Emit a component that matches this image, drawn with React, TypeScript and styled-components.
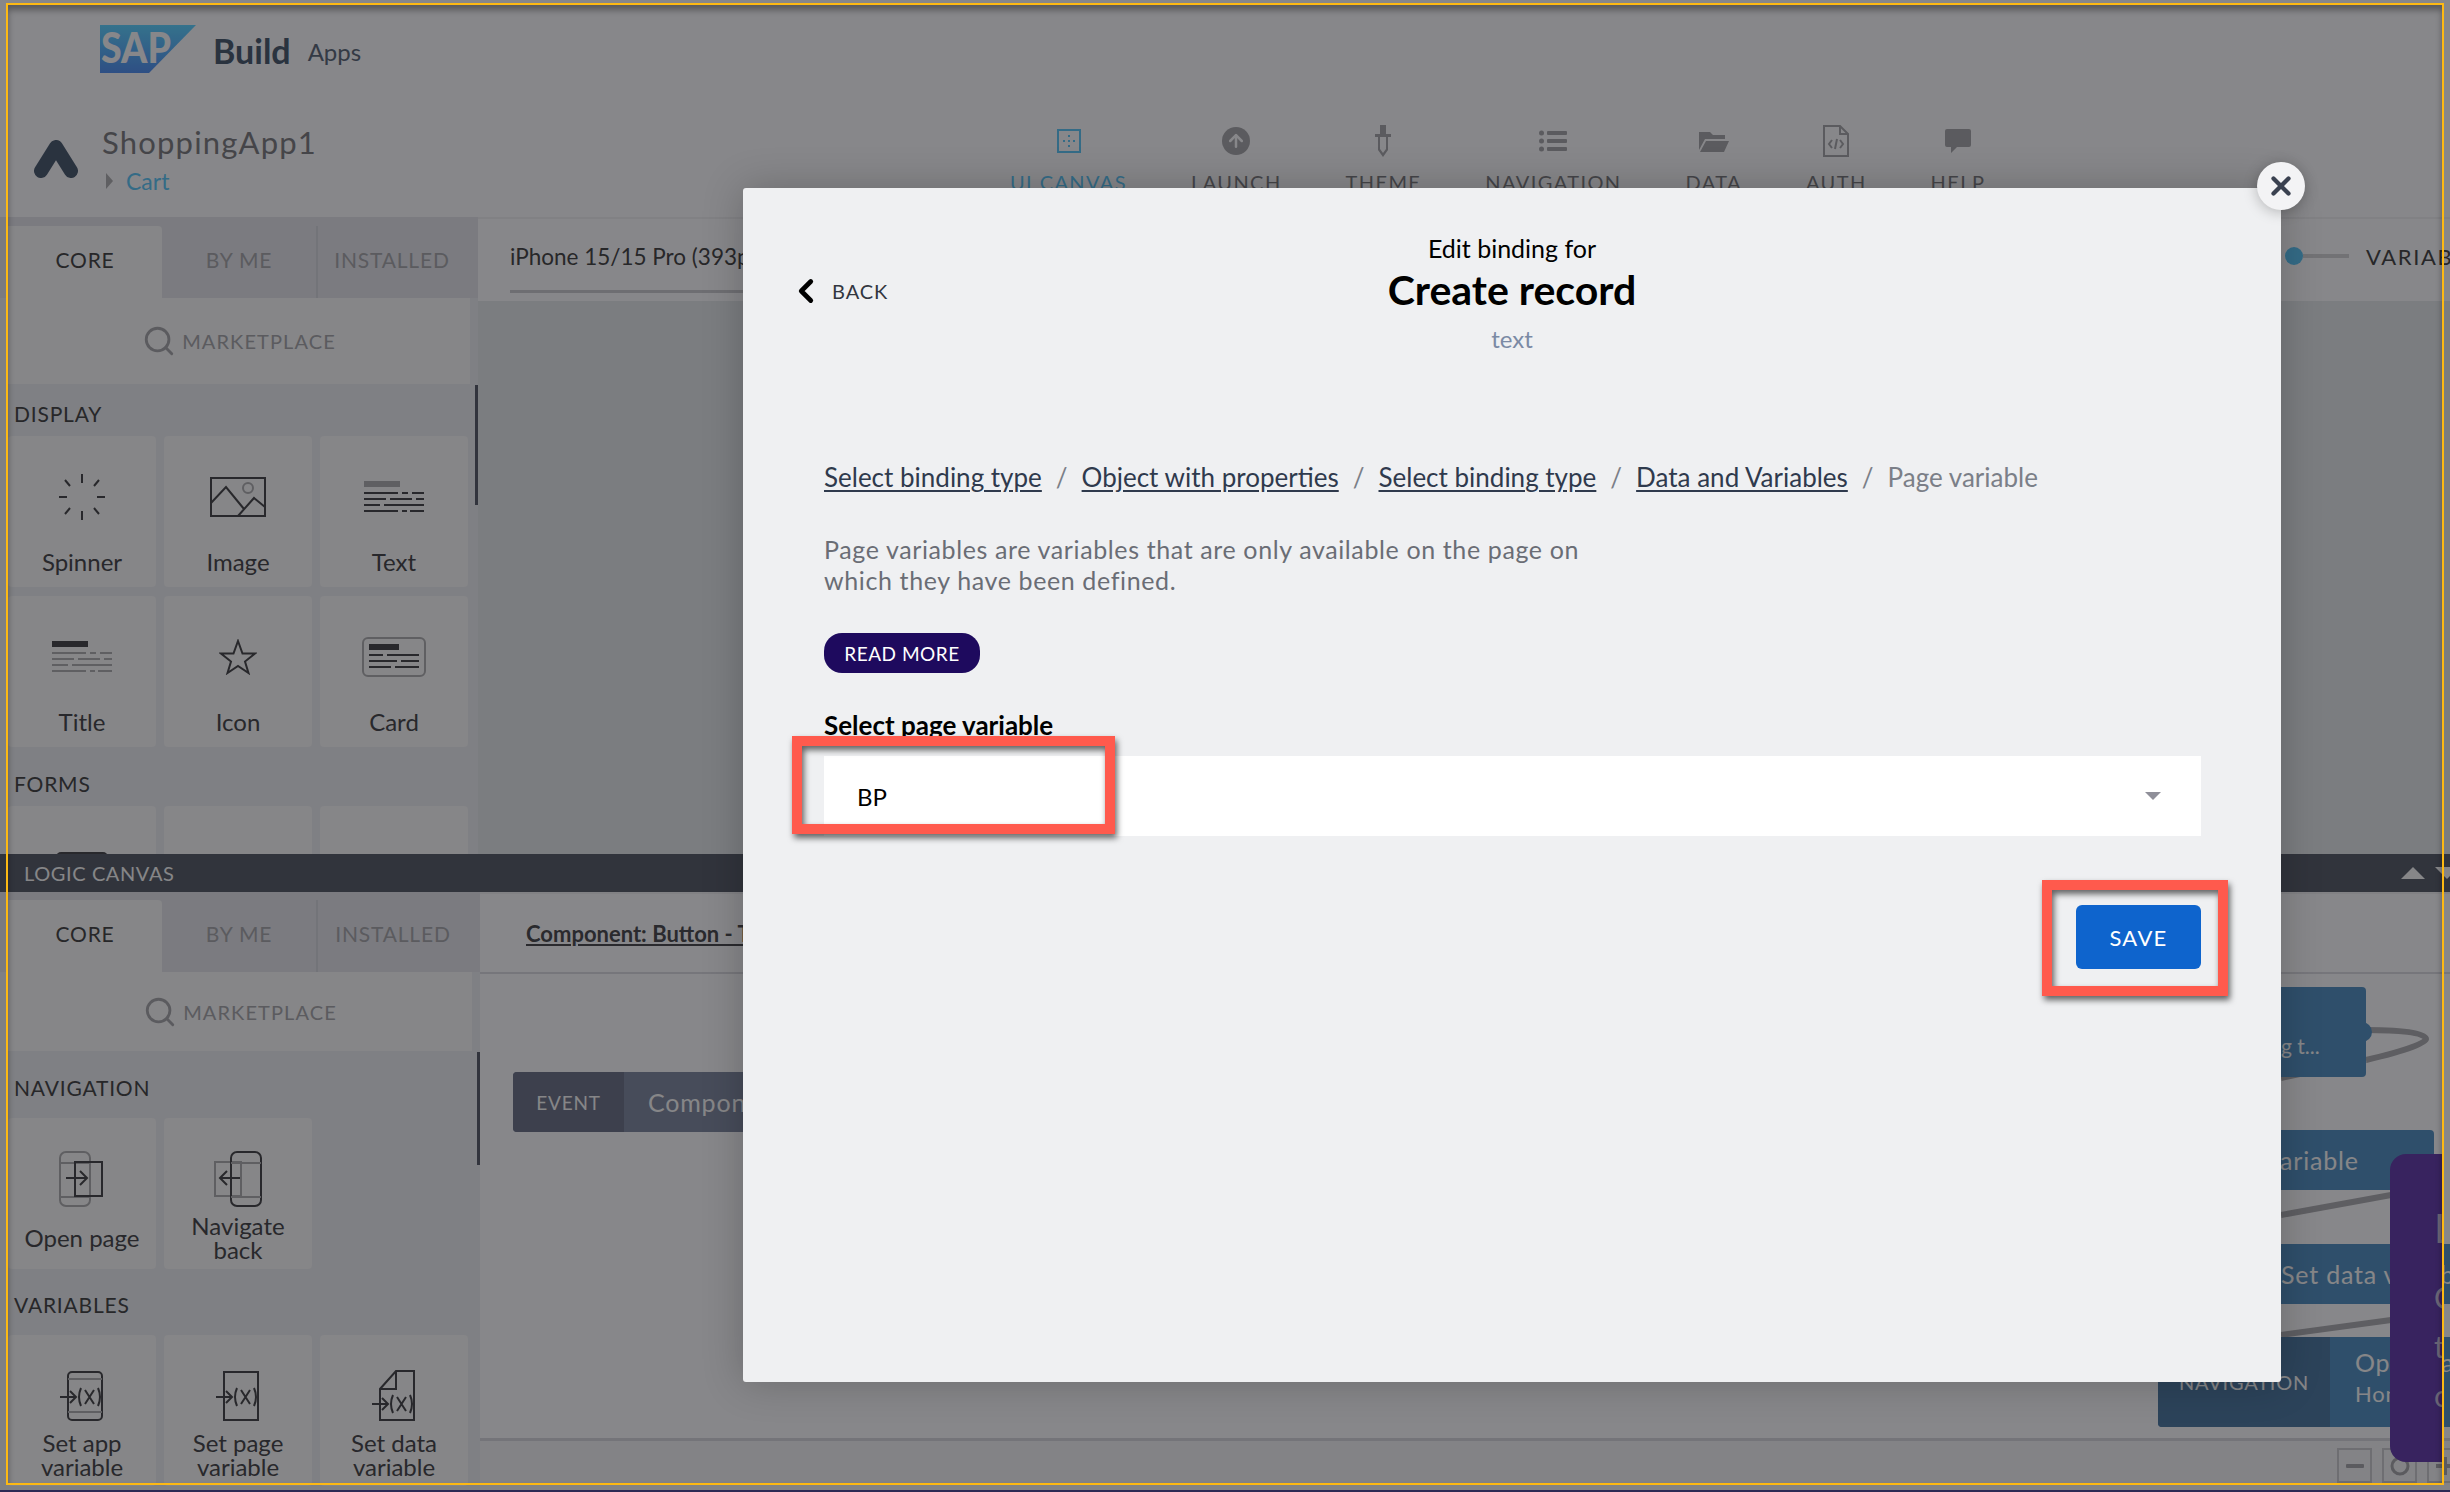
import React from "react";
import styled, { createGlobalStyle } from "styled-components";
import { ChevronLeft, X, Search, ArrowUp } from "lucide-react";

const GlobalStyle = createGlobalStyle`
  html, body {
    margin: 0;
    padding: 0;
    background: #87878a;
    font-family: Lato, "Open Sans", sans-serif;
  }
  * { box-sizing: border-box; }
`;

// the whole builder sits behind the dim layer, so these colours look lighter than the picture
const Page = styled.div`
  position: relative;
  width: 2450px;
  height: 1492px;
  overflow: hidden;
  background: #f6f6fb;
  display: flex;
  flex-direction: column;
`;

const TopBar = styled.header`
  height: 90px;
  padding: 25px 0 0 100px;
  display: flex;
  align-items: flex-start;
`;

const LogoSvg = styled.svg`
  overflow: visible;
  flex: none;
`;

const BuildText = styled.span`
  margin: 7px 0 0 17px;
  font-size: 34px;
  line-height: 38px;
  font-weight: 700;
  color: #4d5d74;
`;

const AppsText = styled.span`
  margin: 12px 0 0 17px;
  font-size: 24px;
  line-height: 30px;
  color: #5f6b7e;
`;

const AppBar = styled.div`
  height: 127px;
  display: flex;
  align-items: flex-start;
`;

const BrandMark = styled.svg`
  margin: 50px 0 0 34px;
  flex: none;
`;

const BrandBlock = styled.div`
  width: 932px;
  flex: none;
  padding: 34px 0 0 24px;
`;

const AppName = styled.div`
  font-size: 31px;
  line-height: 36px;
  letter-spacing: 1.2px;
  color: #7f7f85;
`;

const PageCrumb = styled.div`
  margin-top: 8px;
  display: flex;
  align-items: center;
  gap: 13px;
  font-size: 23px;
  line-height: 26px;
  color: #5fc4f5;
  padding-left: 4px;
  &::before {
    content: "";
    border-left: 7px solid #adadb2;
    border-top: 8px solid transparent;
    border-bottom: 8px solid transparent;
  }
`;

const NavRow = styled.nav`
  display: flex;
  gap: 64px;
  padding-top: 34px;
`;

const NavItem = styled.div<{ $active?: boolean }>`
  display: flex;
  flex-direction: column;
  align-items: center;
  gap: 12px;
  font-size: 20px;
  line-height: 24px;
  letter-spacing: 1.4px;
  white-space: nowrap;
  color: ${(p) => (p.$active ? "#5fc4f5" : "#7f7f85")};
`;

const NavIconSlot = styled.div`
  height: 34px;
  display: flex;
  align-items: center;
  justify-content: center;
`;

const Workspace = styled.section<{ $height: number }>`
  height: ${(p) => p.$height}px;
  flex: none;
  display: flex;
  overflow: hidden;
`;

const Sidebar = styled.div<{ $width: number }>`
  position: relative;
  flex: none;
  width: ${(p) => p.$width}px;
  background: #e7e9f0;
  padding-left: 8px;
`;

const TabRow = styled.div<{ $pad: number }>`
  height: ${(p) => 72 + p.$pad}px;
  padding-top: ${(p) => p.$pad}px;
  margin-left: -8px;
  padding-left: 8px;
  background: #e0e1e9;
  display: flex;
`;

const Tab = styled.div<{ $active?: boolean; $w: number; $last?: boolean }>`
  width: ${(p) => p.$w}px;
  height: 100%;
  padding-bottom: 5px;
  display: flex;
  align-items: center;
  justify-content: center;
  font-size: 21px;
  letter-spacing: 0.8px;
  color: ${(p) => (p.$active ? "#48484c" : "#a6a6ad")};
  background: ${(p) => (p.$active ? "#f4f4f7" : "transparent")};
  border-top-right-radius: ${(p) => (p.$active ? "4px" : "0")};
  border-right: ${(p) => (p.$active || p.$last ? "none" : "2px solid #d2d3dc")};
`;

const Marketplace = styled.div<{ $height: number; $width: number }>`
  width: ${(p) => p.$width}px;
  height: ${(p) => p.$height}px;
  background: #f4f4f7;
  display: flex;
  align-items: center;
  justify-content: center;
  gap: 6px;
  font-size: 20px;
  letter-spacing: 1.1px;
  color: #a6a6ad;
  svg { color: #a6a6ad; }
`;

const ScrollThumb = styled.div<{ $top: number; $height: number }>`
  position: absolute;
  top: ${(p) => p.$top}px;
  right: 0;
  width: 3px;
  height: ${(p) => p.$height}px;
  background: #5c6070;
`;

const SectionLabel = styled.div<{ $height: number; $gap: number }>`
  height: ${(p) => p.$height}px;
  margin-top: ${(p) => p.$gap}px;
  margin-left: 6px;
  padding-bottom: 2px;
  display: flex;
  align-items: center;
  font-size: 21px;
  letter-spacing: 0.8px;
  color: #48484c;
`;

const CardGrid = styled.div`
  display: grid;
  grid-template-columns: repeat(3, 148px);
  grid-auto-rows: 151px;
  column-gap: 8px;
  row-gap: 9px;
`;

const Card = styled.div<{ $gap: number }>`
  background: #f4f4f7;
  border-radius: 4px;
  padding-top: 36px;
  display: flex;
  flex-direction: column;
  align-items: center;
  --label-gap: ${(p) => p.$gap}px;
`;

const CardIcon = styled.div`
  height: 50px;
  display: flex;
  align-items: center;
  justify-content: center;
  color: #4a4a50;
`;

const CardLabel = styled.div`
  flex: 1;
  margin-top: var(--label-gap);
  padding-bottom: 2px;
  display: flex;
  align-items: center;
  text-align: center;
  font-size: 24px;
  line-height: 24px;
  color: #4a4a50;
`;

const Stage = styled.div`
  position: relative;
  flex: 1;
  min-width: 0;
  display: flex;
  flex-direction: column;
`;

const StageBar = styled.div<{ $height: number }>`
  height: ${(p) => p.$height}px;
  flex: none;
  padding: 0 0 0 32px;
  background: #f6f6fb;
  border-top: 2px solid #ebebf1;
  display: flex;
  justify-content: space-between;
  align-items: center;
`;

const DeviceSelect = styled.div`
  height: 66px;
  width: 500px;
  font-size: 22.5px;
  line-height: 60px;
  white-space: nowrap;
  color: #48484c;
  border-bottom: 3px solid #c8c8d0;
`;

const VariableToggle = styled.div`
  display: flex;
  align-items: center;
  margin: 0 -44px 8px 0;
  font-size: 22px;
  letter-spacing: 1.6px;
  color: #48484c;
`;

const ToggleDot = styled.span`
  width: 18px;
  height: 18px;
  border-radius: 50%;
  background: #5fc4f5;
`;

const ToggleTrack = styled.span`
  width: 46px;
  height: 4px;
  margin-right: 17px;
  background: #cfcfd6;
`;

const StageBody = styled.div`
  flex: 1;
  background: #e1e3e9;
`;

const LogicBar = styled.div`
  height: 38px;
  flex: none;
  padding-left: 24px;
  background: #595f6d;
  display: flex;
  align-items: center;
  justify-content: space-between;
  font-size: 20px;
  letter-spacing: 0.6px;
  color: #f4f4f7;
`;

const BarArrows = styled.div`
  display: flex;
  gap: 10px;
  margin-right: -9px;
`;

const BarArrow = styled.span<{ $down?: boolean }>`
  border-left: 12px solid transparent;
  border-right: 12px solid transparent;
  ${(p) => (p.$down ? "border-top: 12px solid #f4f4f7;" : "border-bottom: 12px solid #f4f4f7;")}
`;

const ComponentLink = styled.div`
  width: 100%;
  font-size: 22px;
  font-weight: 700;
  padding-left: 14px;
  text-decoration: underline;
  color: #4e4e54;
`;

const LogicBody = styled.div`
  flex: 1;
  border-top: 2px solid #d8d8e0;
  background: #f6f6fb;
`;

const LogicFooter = styled.div`
  height: 54px;
  flex: none;
  border-top: 3px solid #d4d4dc;
  background: #eeeef4;
`;

const WireLayer = styled.svg`
  position: absolute;
  left: 0;
  top: 0;
`;

// flow nodes live on a free canvas, so they keep their own coordinates
const FlowNode = styled.div<{ $x: number; $y: number; $w: number; $h: number }>`
  position: absolute;
  left: ${(p) => p.$x - 480}px;
  top: ${(p) => p.$y - 892}px;
  width: ${(p) => p.$w}px;
  height: ${(p) => p.$h}px;
  border-radius: 4px;
  background: #5791c4;
  color: #f4f4f7;
  display: flex;
  align-items: center;
  overflow: hidden;
  white-space: nowrap;
`;

const NodeTag = styled.div<{ $w: number }>`
  width: ${(p) => p.$w}px;
  height: 100%;
  flex: none;
  display: flex;
  align-items: center;
  justify-content: center;
  font-size: 20px;
  letter-spacing: 0.8px;
  background: #507aa4;
`;

const EventTag = styled(NodeTag)`
  font-size: 19px;
  background: #6f768c;
`;

const EventNode = styled(FlowNode)`
  background: #818aa4;
`;

const NodeText = styled.div<{ $pad: number; $small?: boolean }>`
  padding-left: ${(p) => p.$pad}px;
  font-size: ${(p) => (p.$small ? 22 : 25)}px;
  line-height: 32px;
  letter-spacing: 0.8px;
`;

const NodeHint = styled.div<{ $pad: number }>`
  padding: 26px 0 0 ${(p) => p.$pad}px;
  font-size: 21px;
`;

const NodeStack = styled.div`
  margin-top: -8px;
`;

const Port = styled.div<{ $x: number; $y: number }>`
  position: absolute;
  left: ${(p) => p.$x - 480 - 10}px;
  top: ${(p) => p.$y - 892 - 10}px;
  width: 20px;
  height: 20px;
  border-radius: 50%;
  background: #5791c4;
`;

const ZoomRow = styled.div`
  position: absolute;
  left: ${2337 - 480}px;
  top: ${1448 - 892}px;
  display: flex;
  gap: 10px;
`;

const ZoomButton = styled.div`
  width: 35px;
  height: 35px;
  border: 2px solid #c8c8d0;
  display: flex;
  align-items: center;
  justify-content: center;
  color: #a6a6ad;
`;

const TourPopup = styled.div`
  position: absolute;
  left: ${2390 - 480}px;
  top: ${1154 - 892}px;
  width: 53px;
  height: 308px;
  border-radius: 16px 0 0 16px;
  background: #6640ad;
  overflow: hidden;
  padding: 50px 0 0 44px;
  color: #c2b9d8;
  font-size: 30px;
  line-height: 49px;
`;

const TourTitle = styled.div`
  font-size: 40px;
  margin-bottom: 20px;
`;

const Dim = styled.div`
  position: absolute;
  inset: 0;
  background: rgba(0, 0, 0, 0.45);
`;

const Modal = styled.div`
  position: absolute;
  left: 743px;
  top: 188px;
  width: 1538px;
  height: 1194px;
  background: #eff0f2;
  border-radius: 3px;
  box-shadow: 0 0 40px rgba(0, 0, 0, 0.22);
  padding: 43px 80px 0 81px;
`;

const CloseButton = styled.div`
  position: absolute;
  right: -24px;
  top: -26px;
  width: 48px;
  height: 48px;
  border-radius: 50%;
  background: #f3f3f5;
  box-shadow: 0 2px 14px rgba(0, 0, 0, 0.25);
  display: flex;
  align-items: center;
  justify-content: center;
  color: #3a4150;
`;

const BackLink = styled.div`
  position: absolute;
  left: 44px;
  top: 84px;
  display: flex;
  align-items: center;
  gap: 7px;
  font-size: 20px;
  letter-spacing: 0.9px;
  color: #32363f;
  svg { color: #000; }
`;

const Heading = styled.div`
  display: flex;
  flex-direction: column;
  align-items: center;
  margin-left: -1px;
`;

const Eyebrow = styled.div`
  font-size: 25px;
  line-height: 34px;
  color: #000;
`;

const Title = styled.div`
  font-size: 41px;
  line-height: 50px;
  font-weight: 700;
  color: #000;
`;

const Subtitle = styled.div`
  margin-top: 7px;
  font-size: 24px;
  line-height: 34px;
  color: #7b8aa5;
`;

const Crumbs = styled.div`
  margin-top: 105px;
  display: flex;
  gap: 14px;
  font-size: 26px;
  line-height: 32px;
  color: #2f3a4d;
`;

const CrumbLink = styled.a`
  text-decoration: underline;
  text-underline-offset: 3px;
`;

const CrumbSep = styled.span`
  color: #7b7f88;
`;

const CrumbCurrent = styled.span`
  color: #7b7f88;
`;

const Description = styled.p`
  margin: 41px 0 0;
  width: 790px;
  font-size: 25px;
  letter-spacing: 0.62px;
  line-height: 31px;
  color: #6a6d75;
`;

const ReadMore = styled.button`
  display: block;
  margin-top: 37px;
  width: 156px;
  height: 40px;
  border: none;
  border-radius: 18px;
  background: #1e0a5e;
  color: #fff;
  font: 400 19px Lato, "Open Sans", sans-serif;
  letter-spacing: 0.5px;
`;

const FieldLabel = styled.div`
  margin-top: 37px;
  font-size: 26px;
  line-height: 30px;
  font-weight: 700;
  color: #000;
`;

const SelectBox = styled.div`
  margin-top: 16px;
  height: 80px;
  padding: 0 40px 0 33px;
  background: #fff;
  display: flex;
  align-items: center;
  justify-content: space-between;
  font-size: 24px;
  color: #000;
  &::after {
    content: "";
    border-left: 8px solid transparent;
    border-right: 8px solid transparent;
    border-top: 8px solid #8f8f99;
  }
`;

const SaveRow = styled.div`
  margin-top: 69px;
  display: flex;
  justify-content: flex-end;
`;

const SaveButton = styled.button`
  width: 125px;
  height: 64px;
  border: none;
  border-radius: 6px;
  background: #0e64cd;
  color: #fff;
  font: 400 22px Lato, "Open Sans", sans-serif;
  letter-spacing: 1.3px;
`;

const Callout = styled.div<{ $x: number; $y: number; $w: number; $h: number }>`
  position: absolute;
  left: ${(p) => p.$x}px;
  top: ${(p) => p.$y}px;
  width: ${(p) => p.$w}px;
  height: ${(p) => p.$h}px;
  border: 10px solid #ff5a4d;
  filter: drop-shadow(2px 4px 3px rgba(0, 0, 0, 0.6));
`;

const ScreenFrame = styled.div`
  position: absolute;
  left: 6px;
  right: 6px;
  top: 3px;
  bottom: 7px;
  border: 2px solid #fdb913;
  box-shadow: inset 0 5px 6px rgba(0, 0, 0, 0.35);
  pointer-events: none;
`;

const BottomEdge = styled.div`
  position: absolute;
  left: 0;
  right: 0;
  bottom: 0;
  height: 2px;
  background: #2c2a55;
`;

const SapLogo = () => (
  <LogoSvg width="96" height="48" viewBox="0 0 96 48">
    <defs>
      <linearGradient id="sapBlue" x1="0" y1="0" x2="0" y2="1">
        <stop offset="0" stopColor="#61d0ff" />
        <stop offset="1" stopColor="#5590f0" />
      </linearGradient>
    </defs>
    <polygon points="0,0 96,0 49,48 0,48" fill="url(#sapBlue)" />
    <text
      x="1"
      y="38"
      fontFamily="Lato, sans-serif"
      fontWeight="900"
      fontSize="42"
      textLength="70"
      lengthAdjust="spacingAndGlyphs"
      fill="#f6f6fb"
    >
      SAP
    </text>
  </LogoSvg>
);

const Spinner = () => (
  <svg width="48" height="46" viewBox="0 0 48 46" stroke="currentColor" strokeWidth="2" fill="none">
    <path d="M24 0v9M24 37v9M1 23h8M39 23h8M7 6l5 6M41 6l-5 6M7 40l5-6M41 40l-5-6" />
  </svg>
);

const ImageGlyph = () => (
  <svg width="56" height="40" viewBox="0 0 56 40" fill="none" stroke="currentColor" strokeWidth="2">
    <rect x="1" y="1" width="54" height="38" />
    <path d="M1 26 16 10 34 32M28 39 44 21 55 30" />
    <circle cx="38" cy="11" r="5" stroke="#adadb2" />
  </svg>
);

const TextLines = ({ head, lines }: { head: string; lines: string }) => (
  <svg width="60" height="32" viewBox="0 0 60 32">
    <rect x="0" y="0" width="36" height="6" fill={head} />
    <path
      d="M0 12h34M38 12h6M48 12h12M0 18h22M26 18h22M52 18h8M0 24h16M20 24h40M0 30h34M38 30h5M46 30h14"
      stroke={lines}
      strokeWidth="2"
    />
  </svg>
);

const StarGlyph = () => (
  <svg width="38" height="36" viewBox="0 0 38 36" fill="none" stroke="currentColor" strokeWidth="2">
    <path d="M19 2 23.5 14.5 36 14.5 26 22.5 29.5 34 19 27 8.500 34 12 22.500 2 14.500 14.500 14.500Z" />
  </svg>
);

const CardGlyph = () => (
  <svg width="64" height="40" viewBox="0 0 64 40" fill="none">
    <rect x="1" y="1" width="62" height="38" rx="5" stroke="#adadb2" strokeWidth="2" />
    <rect x="7" y="7" width="30" height="6" fill="currentColor" />
    <path d="M7 18h14M25 18h32M7 24h28M39 24h18M7 30h22M33 30h24" stroke="currentColor" strokeWidth="2" />
  </svg>
);

const OpenPage = () => (
  <svg width="46" height="56" viewBox="0 0 46 56" fill="none" strokeWidth="2">
    <rect x="1" y="1" width="30" height="54" rx="6" stroke="#adadb2" />
    <path d="M1 12h30M1 46h30" stroke="#adadb2" />
    <rect x="16" y="11" width="27" height="34" stroke="currentColor" />
    <path d="M7 27h20M21 20l7 7-7 7" stroke="currentColor" />
  </svg>
);

const NavigateBack = () => (
  <svg width="48" height="56" viewBox="0 0 48 56" fill="none" strokeWidth="2">
    <rect x="1" y="11" width="26" height="34" stroke="#adadb2" />
    <rect x="17" y="1" width="30" height="54" rx="6" stroke="currentColor" />
    <path d="M17 12h30M17 46h30" stroke="#adadb2" />
    <path d="M26 27H6M13 20l-7 7 7 7" stroke="currentColor" />
  </svg>
);

const SetVariable = ({ kind }: { kind: "app" | "page" | "data" }) => (
  <svg width="44" height="52" viewBox="0 0 44 52" fill="none" stroke="currentColor" strokeWidth="2">
    {kind === "app" && (
      <>
        <rect x="8" y="2" width="34" height="48" rx="4" />
        <path d="M8 9h34M8 42h34" stroke="#adadb2" />
      </>
    )}
    {kind === "page" && <rect x="8" y="2" width="34" height="48" />}
    {kind === "data" && <path d="M8 50V19L24 1h18v49zM8 19h16V1" />}
    <g transform={kind === "data" ? "translate(0 7)" : undefined}>
      <path d="M0 27h16M10 21l6 6-6 6" />
      <path d="M21 18q-4 9 0 18M38 18q4 9 0 18M25 20l9 14M34 20l-9 14" />
    </g>
  </svg>
);

const uiDisplay = [
  { label: "Spinner", icon: <Spinner /> },
  { label: "Image", icon: <ImageGlyph /> },
  { label: "Text", icon: <TextLines head="#adadb2" lines="#4a4a50" /> },
  { label: "Title", icon: <TextLines head="#4a4a50" lines="#adadb2" /> },
  { label: "Icon", icon: <StarGlyph /> },
  { label: "Card", icon: <CardGlyph /> },
];

const navItems = ["UI CANVAS", "LAUNCH", "THEME", "NAVIGATION", "DATA", "AUTH", "HELP"];

const navIcons = [
  <svg key="ui" width="24" height="24" viewBox="0 0 24 24" fill="none" stroke="#5fc4f5" strokeWidth="2">
    <rect x="1" y="1" width="22" height="22" />
    <path d="M12 6v2M12 11v2M12 16v2M6 12h2M16 12h2" />
  </svg>,
  <svg key="launch" width="28" height="28" viewBox="0 0 28 28">
    <circle cx="14" cy="14" r="14" fill="#a6a6ad" />
    <g color="#f6f6fb" transform="translate(4 4)">
      <ArrowUp size={20} strokeWidth={3} />
    </g>
  </svg>,
  <svg key="theme" width="16" height="32" viewBox="0 0 16 32" fill="#a6a6ad">
    <path d="M5 0h6v9h5v3h-3v13l-5 7-5-7V12H0V9h5zM5 12v12l3 4 3-4V12z" />
  </svg>,
  <svg key="nav" width="28" height="22" viewBox="0 0 28 22" fill="#a6a6ad">
    <circle cx="2.5" cy="3" r="2.5" />
    <circle cx="2.5" cy="11" r="2.5" />
    <circle cx="2.5" cy="19" r="2.5" />
    <rect x="8" y="1" width="20" height="4" rx="1" />
    <rect x="8" y="9" width="20" height="4" rx="1" />
    <rect x="8" y="17" width="20" height="4" rx="1" />
  </svg>,
  <svg key="data" width="30" height="22" viewBox="0 0 30 22" fill="#a6a6ad">
    <path d="M0 2h11l3 3h12v4H6L0 20zM7 11h23l-5 11H1z" />
  </svg>,
  <svg key="auth" width="26" height="32" viewBox="0 0 26 32" fill="none" stroke="#a6a6ad" strokeWidth="2">
    <path d="M1 1h16l8 8v22H1zM17 1v8h8" />
    <path d="M9 15l-3 4 3 4M17 15l3 4-3 4M14 14l-2 10" />
  </svg>,
  <svg key="help" width="26" height="24" viewBox="0 0 26 24" fill="#a6a6ad">
    <path d="M2 0h22a2 2 0 0 1 2 2v14a2 2 0 0 1-2 2H12l-6 6v-6H2a2 2 0 0 1-2-2V2a2 2 0 0 1 2-2z" />
  </svg>,
];

const App = () => {
  return (
    <>
      <GlobalStyle />
      <Page>
        <TopBar>
          <SapLogo />
          <BuildText>Build</BuildText>
          <AppsText>Apps</AppsText>
        </TopBar>
        <AppBar>
          <BrandMark width="44" height="38" viewBox="0 0 44 38">
            <path
              d="M7 31 22 7 37 31"
              fill="none"
              stroke="#4d5d74"
              strokeWidth="14"
              strokeLinecap="round"
              strokeLinejoin="round"
            />
          </BrandMark>
          <BrandBlock>
            <AppName>ShoppingApp1</AppName>
            <PageCrumb>Cart</PageCrumb>
          </BrandBlock>
          <NavRow>
            {navItems.map((item, i) => (
              <NavItem key={item} $active={i === 0}>
                <NavIconSlot>{navIcons[i]}</NavIconSlot>
                {item}
              </NavItem>
            ))}
          </NavRow>
        </AppBar>

        <Workspace $height={637}>
          <Sidebar $width={478}>
            <TabRow $pad={9}>
              <Tab $active $w={154}>CORE</Tab>
              <Tab $w={156}>BY ME</Tab>
              <Tab $last $w={148}>INSTALLED</Tab>
            </TabRow>
            <Marketplace $height={86} $width={462}>
              <Search size={34} strokeWidth={2} />
              MARKETPLACE
            </Marketplace>
            <ScrollThumb $top={168} $height={120} />
            <SectionLabel $height={44} $gap={8}>DISPLAY</SectionLabel>
            <CardGrid>
              {uiDisplay.map((c) => (
                <Card key={c.label} $gap={16}>
                  <CardIcon>{c.icon}</CardIcon>
                  <CardLabel>{c.label}</CardLabel>
                </Card>
              ))}
            </CardGrid>
            <SectionLabel $height={44} $gap={15}>FORMS</SectionLabel>
            <CardGrid>
              <Card $gap={16}>
                <CardIcon>
                  <svg width="52" height="50" viewBox="0 0 52 50">
                    <rect x="0" y="10" width="52" height="30" rx="5" fill="#4a4a50" />
                  </svg>
                </CardIcon>
              </Card>
              <Card $gap={16} />
              <Card $gap={16} />
            </CardGrid>
          </Sidebar>
          <Stage>
            <StageBar $height={84}>
              <DeviceSelect>iPhone 15/15 Pro (393px)</DeviceSelect>
              <VariableToggle>
                <ToggleDot />
                <ToggleTrack />
                VARIABLES
              </VariableToggle>
            </StageBar>
            <StageBody />
          </Stage>
        </Workspace>

        <LogicBar>
          LOGIC CANVAS
          <BarArrows>
            <BarArrow />
            <BarArrow $down />
          </BarArrows>
        </LogicBar>

        <Workspace $height={600}>
          <Sidebar $width={480}>
            <TabRow $pad={8}>
              <Tab $active $w={154}>CORE</Tab>
              <Tab $w={156}>BY ME</Tab>
              <Tab $last $w={150}>INSTALLED</Tab>
            </TabRow>
            <Marketplace $height={79} $width={464}>
              <Search size={34} strokeWidth={2} />
              MARKETPLACE
            </Marketplace>
            <ScrollThumb $top={160} $height={113} />
            <SectionLabel $height={60} $gap={7}>NAVIGATION</SectionLabel>
            <CardGrid>
              <Card $gap={4}>
                <CardIcon><OpenPage /></CardIcon>
                <CardLabel>Open page</CardLabel>
              </Card>
              <Card $gap={4}>
                <CardIcon><NavigateBack /></CardIcon>
                <CardLabel>Navigate<br />back</CardLabel>
              </Card>
            </CardGrid>
            <SectionLabel $height={60} $gap={6}>VARIABLES</SectionLabel>
            <CardGrid>
              <Card $gap={4}>
                <CardIcon><SetVariable kind="app" /></CardIcon>
                <CardLabel>Set app<br />variable</CardLabel>
              </Card>
              <Card $gap={4}>
                <CardIcon><SetVariable kind="page" /></CardIcon>
                <CardLabel>Set page<br />variable</CardLabel>
              </Card>
              <Card $gap={4}>
                <CardIcon><SetVariable kind="data" /></CardIcon>
                <CardLabel>Set data<br />variable</CardLabel>
              </Card>
            </CardGrid>
          </Sidebar>
          <Stage>
            <StageBar $height={80}>
              <ComponentLink>Component: Button - Tap</ComponentLink>
            </StageBar>
            <LogicBody />
            <LogicFooter />
            <WireLayer width="1970" height="600" viewBox="480 892 1970 600" fill="none" stroke="#ababb2" strokeWidth="6">
              <path d="M2366 1030c30 0 60 2 60 9 0 5-30 14-60 21" />
              <path d="M2281 1078l85-18" />
              <path d="M2281 1215l110-20" />
              <path d="M2281 1335l110-15" />
            </WireLayer>
            <EventNode $x={513} $y={1072} $w={1000} $h={60}>
              <EventTag $w={111}>EVENT</EventTag>
              <NodeText $pad={24}>Component: Button - Tap</NodeText>
            </EventNode>
            <FlowNode $x={2100} $y={987} $w={266} $h={90}>
              <NodeHint $pad={181}>g t...</NodeHint>
            </FlowNode>
            <Port $x={2362} $y={1032} />
            <FlowNode $x={2100} $y={1130} $w={334} $h={60}>
              <NodeText $pad={180}>ariable</NodeText>
            </FlowNode>
            <FlowNode $x={2150} $y={1244} $w={310} $h={60}>
              <NodeText $pad={131}>Set data variable</NodeText>
            </FlowNode>
            <FlowNode $x={2158} $y={1337} $w={300} $h={90}>
              <NodeTag $w={172}>NAVIGATION</NodeTag>
              <NodeStack>
                <NodeText $pad={25}>Open page</NodeText>
                <NodeText $pad={25} $small>Home</NodeText>
              </NodeStack>
            </FlowNode>
            <ZoomRow>
              <ZoomButton>
                <svg width="18" height="4" viewBox="0 0 18 4"><rect width="18" height="4" rx="1" fill="currentColor" /></svg>
              </ZoomButton>
              <ZoomButton>
                <svg width="20" height="20" viewBox="0 0 20 20"><circle cx="10" cy="10" r="8" fill="none" stroke="currentColor" strokeWidth="3" /></svg>
              </ZoomButton>
              <ZoomButton>
                <svg width="18" height="18" viewBox="0 0 18 18"><path d="M0 9h18M9 0v18" stroke="currentColor" strokeWidth="4" /></svg>
              </ZoomButton>
            </ZoomRow>
            <TourPopup>
              <TourTitle>L</TourTitle>
              <div>C</div>
              <div>te</div>
              <div>o</div>
            </TourPopup>
          </Stage>
        </Workspace>

        <Dim />

        <Modal>
          <CloseButton>
            <X size={30} strokeWidth={3.4} />
          </CloseButton>
          <BackLink>
            <ChevronLeft size={38} strokeWidth={3} />
            BACK
          </BackLink>
          <Heading>
            <Eyebrow>Edit binding for</Eyebrow>
            <Title>Create record</Title>
            <Subtitle>text</Subtitle>
          </Heading>
          <Crumbs>
            <CrumbLink>Select binding type</CrumbLink>
            <CrumbSep>/</CrumbSep>
            <CrumbLink>Object with properties</CrumbLink>
            <CrumbSep>/</CrumbSep>
            <CrumbLink>Select binding type</CrumbLink>
            <CrumbSep>/</CrumbSep>
            <CrumbLink>Data and Variables</CrumbLink>
            <CrumbSep>/</CrumbSep>
            <CrumbCurrent>Page variable</CrumbCurrent>
          </Crumbs>
          <Description>
            Page variables are variables that are only available on the page on which they have been defined.
          </Description>
          <ReadMore>READ MORE</ReadMore>
          <FieldLabel>Select page variable</FieldLabel>
          <SelectBox>BP</SelectBox>
          <SaveRow>
            <SaveButton>SAVE</SaveButton>
          </SaveRow>
          <Callout $x={49} $y={548} $w={323} $h={98} />
          <Callout $x={1299} $y={692} $w={186} $h={116} />
        </Modal>

        <BottomEdge />
        <ScreenFrame />
      </Page>
    </>
  );
};

export default App;
